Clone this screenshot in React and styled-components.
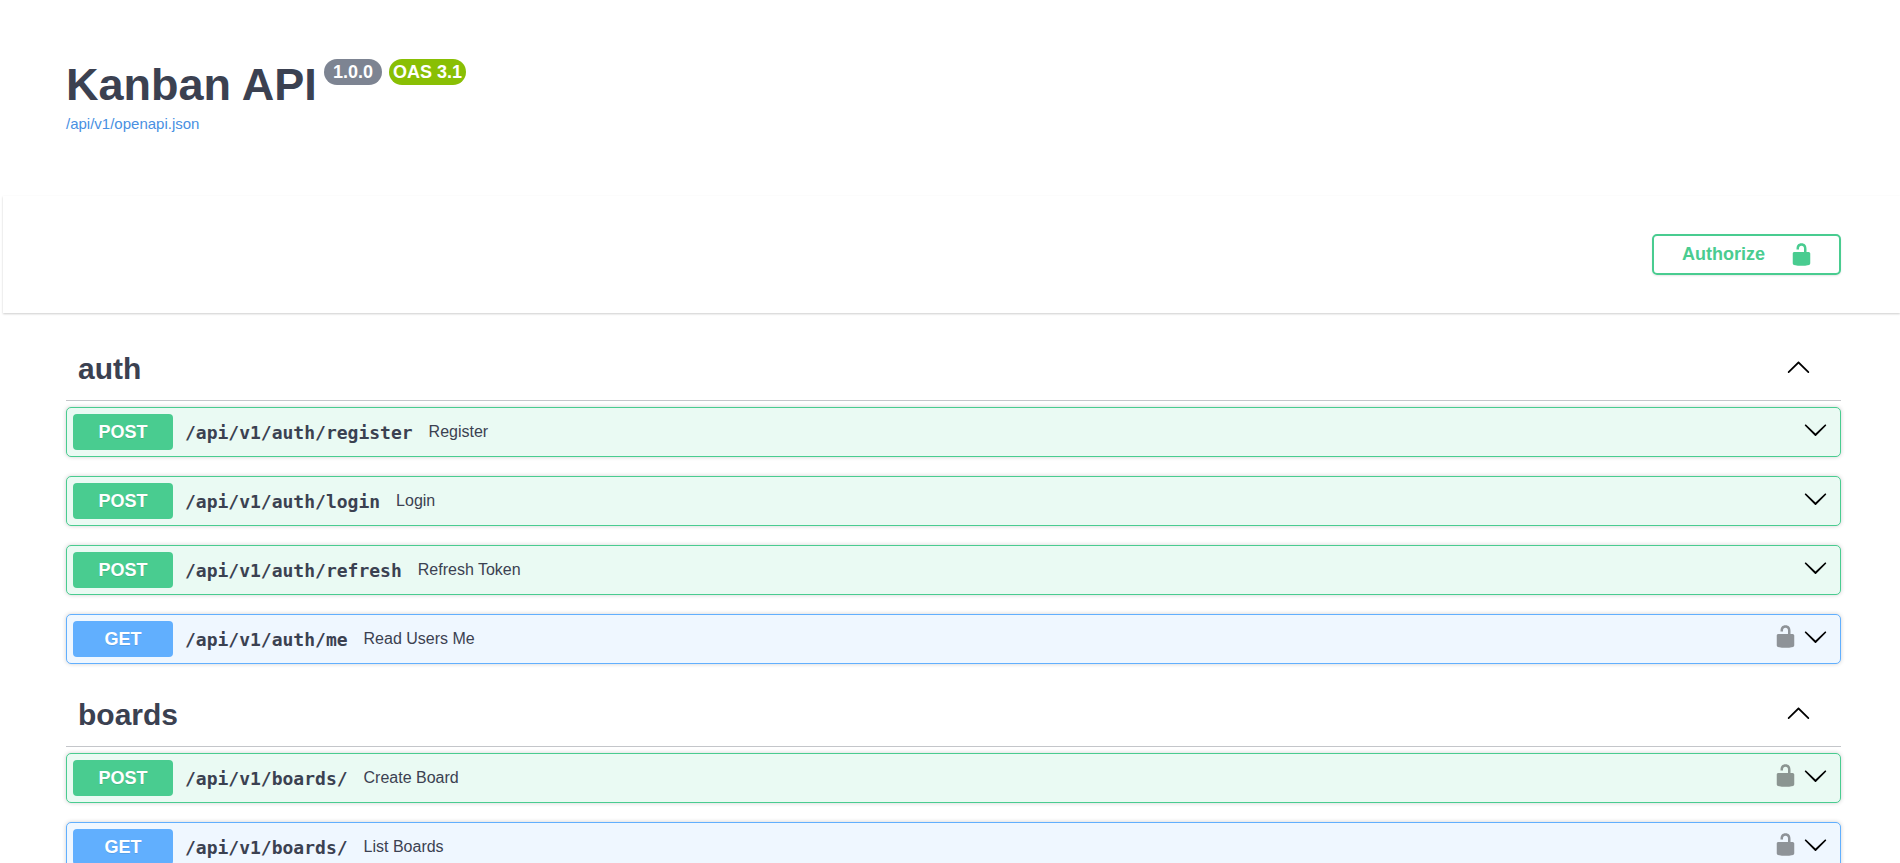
import { useState } from "react";
import styled, { createGlobalStyle } from "styled-components";


const GlobalStyle = createGlobalStyle`
  * {
    box-sizing: border-box;
  }

  html {
    scrollbar-width: none;
  }

  body {
    margin: 0;
    background: #fff;
    color: #3b4151;
    font-family: "Liberation Sans", Arial, sans-serif;
  }
`;

const colors = {
  post: { main: "#49cc90", tint: "#eafaf3" },
  get: { main: "#61affe", tint: "#eff7ff" },
};

const Page = styled.main`
  margin-left: 3px;
`;

const Wrapper = styled.div`
  padding: 0 59px 0 63px;
`;

const Info = styled.header`
  padding: 59px 0 63px;
`;

const TitleRow = styled.div`
  display: flex;
  align-items: flex-start;
  gap: 7px;
`;

const Title = styled.h1`
  margin: 0;
  font-size: 45px;
  line-height: 52px;
`;

const Badge = styled.span`
  padding: 0 ${({ $wide }) => ($wide ? "9px" : "4px")};
  border-radius: 26px;
  background: ${({ $color }) => $color};
  color: #fff;
  font-size: 18px;
  font-weight: bold;
  line-height: 26px;
`;

const SpecLink = styled.a`
  display: inline-block;
  margin-top: 4px;
  color: #4990e2;
  font-size: 15px;
  line-height: 17px;
  text-decoration: none;
`;

const SchemeBar = styled.section`
  padding: 38px 0;
  background: #fff;
  box-shadow: 0 1px 2px rgba(0, 0, 0, 0.2);
`;

const SchemeInner = styled(Wrapper)`
  display: flex;
  justify-content: flex-end;
`;

const AuthorizeButton = styled.button`
  display: flex;
  align-items: center;
  gap: 24px;
  height: 41px;
  padding: 0 25px 0 28px;
  border: 2px solid #49cc90;
  border-radius: 5px;
  background: transparent;
  box-shadow: 0 1px 2px rgba(0, 0, 0, 0.1);
  color: #49cc90;
  font-family: inherit;
  font-size: 18px;
  font-weight: bold;
  cursor: pointer;
`;

const Sections = styled(Wrapper)`
  padding-top: 25px;
`;

const TagHeader = styled.div`
  display: flex;
  align-items: center;
  justify-content: space-between;
  height: 63px;
  margin-bottom: 6px;
  padding: 0 30px 0 12px;
  border-bottom: 1px solid rgba(59, 65, 81, 0.3);
`;

const TagName = styled.h2`
  margin: 0;
  font-size: 30px;
  line-height: 34px;
`;

const OperationList = styled.div`
  display: flex;
  flex-direction: column;
  gap: 19px;
  margin-bottom: 20px;
`;

const OperationRow = styled.div`
  display: flex;
  align-items: center;
  padding: 6px 12px 6px 6px;
  border: 1px solid ${({ $method }) => colors[$method].main};
  border-radius: 5px;
  background: ${({ $method }) => colors[$method].tint};
  box-shadow: 0 0 4px rgba(0, 0, 0, 0.19);
`;

const Method = styled.span`
  width: 100px;
  border-radius: 4px;
  background: ${({ $method }) => colors[$method].main};
  color: #fff;
  font-size: 18px;
  font-weight: bold;
  line-height: 36px;
  text-align: center;
  text-shadow: 0 1px 0 rgba(0, 0, 0, 0.1);
  text-transform: uppercase;
`;

const Path = styled.a`
  margin: 0 16px 0 12px;
  color: inherit;
  font-family: "DejaVu Sans Mono", monospace;
  font-size: 18px;
  font-weight: bold;
  text-decoration: none;
`;

const Summary = styled.span`
  flex: 1;
  font-size: 16px;
`;

const Actions = styled.div`
  display: flex;
  gap: 5px;
`;

const IconButton = styled.button`
  display: flex;
  padding: 0 0 5px;
  border: 0;
  background: none;
  color: #000;
  opacity: ${({ $faded }) => ($faded ? 0.4 : 1)};
  cursor: pointer;
`;

const UnlockedIcon = () => (
  <svg width="25" height="25" viewBox="0 0 20 20" fill="currentColor" aria-hidden="true">
    <path d="M15.8 8H14V5.6C14 2.703 12.665 1 10 1 7.334 1 6 2.703 6 5.6V6h2v-.801C8 3.754 8.797 3 10 3c1.203 0 2 .754 2 2.199V8H4c-.553 0-1 .646-1 1.199V17c0 .549.428 1.139.951 1.307l1.197.387C5.672 18.861 6.55 19 7.1 19h5.8c.549 0 1.428-.139 1.951-.307l1.196-.387c.524-.167.953-.757.953-1.306V9.199C17 8.646 16.352 8 15.8 8z" />
  </svg>
);

const ArrowIcon = ({ up }) => (
  <svg width="25" height="25" viewBox="0 0 20 20" fill="currentColor" aria-hidden="true">
    <path
      d={
        up
          ? "M17.418 14.908c.272.268.709.268.979 0s.271-.701 0-.969l-7.908-7.83c-.27-.268-.707-.268-.979 0l-7.908 7.83c-.27.268-.27.701 0 .969.271.268.709.268.979 0L10 7.767l7.418 7.141z"
          : "M17.418 6.109c.272-.268.709-.268.979 0s.271.701 0 .969l-7.908 7.83c-.27.268-.707.268-.979 0l-7.908-7.83c-.27-.268-.27-.701 0-.969.271-.268.709-.268.979 0L10 13.25l7.418-7.141z"
      }
    />
  </svg>
);

const tags = [
  {
    name: "auth",
    operations: [
      { method: "post", path: "/api/v1/auth/register", summary: "Register" },
      { method: "post", path: "/api/v1/auth/login", summary: "Login" },
      { method: "post", path: "/api/v1/auth/refresh", summary: "Refresh Token" },
      { method: "get", path: "/api/v1/auth/me", summary: "Read Users Me", secured: true },
    ],
  },
  {
    name: "boards",
    operations: [
      { method: "post", path: "/api/v1/boards/", summary: "Create Board", secured: true },
      { method: "get", path: "/api/v1/boards/", summary: "List Boards", secured: true },
    ],
  },
];

const Operation = ({ method, path, summary, secured }) => {
  return (
    <OperationRow $method={method}>
      <Method $method={method}>{method}</Method>
      <Path href={`#${method}${path}`}>{path}</Path>
      <Summary>{summary}</Summary>
      <Actions>
        {secured && (
          <IconButton $faded aria-label="Authorization button unlocked">
            <UnlockedIcon />
          </IconButton>
        )}
        <IconButton aria-label={`Expand ${method} ${path}`}>
          <ArrowIcon />
        </IconButton>
      </Actions>
    </OperationRow>
  );
};

const TagSection = ({ name, operations }) => {
  const [open, setOpen] = useState(true);

  return (
    <section>
      <TagHeader>
        <TagName>{name}</TagName>
        <IconButton
          aria-label={`Toggle ${name}`}
          aria-expanded={open}
          onClick={() => setOpen(!open)}
        >
          <ArrowIcon up={open} />
        </IconButton>
      </TagHeader>
      {open && (
        <OperationList>
          {operations.map((operation) => (
            <Operation key={operation.method + operation.path} {...operation} />
          ))}
        </OperationList>
      )}
    </section>
  );
};

const App = () => {
  return (
    <Page>
      <GlobalStyle />
      <Wrapper>
        <Info>
          <TitleRow>
            <Title>Kanban API</Title>
            <Badge $color="#7d8492" $wide>1.0.0</Badge>
            <Badge $color="#89bf04">OAS 3.1</Badge>
          </TitleRow>
          <SpecLink href="/api/v1/openapi.json">/api/v1/openapi.json</SpecLink>
        </Info>
      </Wrapper>
      <SchemeBar>
        <SchemeInner>
          <AuthorizeButton>
            Authorize
            <UnlockedIcon />
          </AuthorizeButton>
        </SchemeInner>
      </SchemeBar>
      <Sections>
        {tags.map((tag) => (
          <TagSection key={tag.name} {...tag} />
        ))}
      </Sections>
    </Page>
  );
};

export default App;
